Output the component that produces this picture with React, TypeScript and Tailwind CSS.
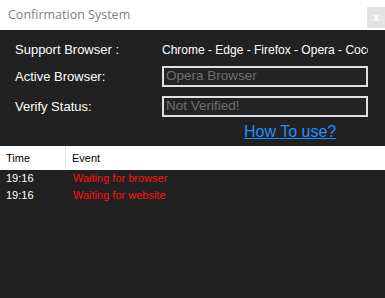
export default function App() {
  const rows = [
    { time: "19:16", event: "Waiting for browser" },
    { time: "19:16", event: "Waiting for website" },
  ];

  return (
    <div
      className="w-[385px] h-[298px] bg-[#212121] overflow-hidden flex flex-col"
      style={{ fontFamily: "'Liberation Sans', Arial, sans-serif" }}
    >
      {/* Title bar */}
      <div className="relative h-[30px] bg-white flex items-center pl-[8px] shrink-0">
        <span className="text-[12.5px] text-[#808080] font-['Open_Sans',sans-serif]">
          Confirmation System
        </span>
        <div className="absolute right-0 top-[7px] w-[18px] h-[21px] bg-[#e3e3e3] flex items-center justify-center text-[11px] font-bold text-white">
          x
        </div>
      </div>

      {/* Form */}
      <div className="pl-[15px] pt-[10px]">
        <div className="flex items-center h-[20px]">
          <div className="w-[147px] text-[13px] text-white">Support Browser :</div>
          <div className="w-[206px] overflow-hidden whitespace-nowrap text-[12px] text-white">
            Chrome - Edge - Firefox - Opera - Coccoc
          </div>
        </div>
        <div className="flex items-center mt-[6px] h-[21px]">
          <div className="w-[147px] text-[13px] text-white">Active Browser:</div>
          <div className="w-[206px] h-[21px] border-2 border-[#e0e0e0] bg-[#232323] flex items-center pl-[2px] text-[13.5px] text-[#6f6f6f]">
            Opera Browser
          </div>
        </div>
        <div className="flex items-center mt-[9px] h-[21px]">
          <div className="w-[147px] text-[13px] text-white">Verify Status:</div>
          <div className="w-[206px] h-[21px] border-2 border-[#e0e0e0] bg-[#232323] flex items-center pl-[2px] text-[13.5px] text-[#6f6f6f]">
            Not Verified!
          </div>
        </div>
        <div className="mt-[6px] h-[17px] flex items-center pl-[229px]">
          <span className="text-[16px] leading-[17px] text-[#1e90ff] underline">How To use?</span>
        </div>
      </div>

      {/* List */}
      <div className="mt-[6px] flex-1 flex flex-col">
        <div className="h-[24px] bg-white flex text-[11px] text-black shrink-0">
          <div className="w-[66px] border-r border-[#e5e5e5] flex items-center pl-[6px]">Time</div>
          <div className="flex items-center pl-[6px]">Event</div>
        </div>
        <div className="text-[11px]">
          {rows.map((r, i) => (
            <div key={i} className="flex h-[17px] items-center">
              <div className="w-[67px] pl-[6px] text-white">{r.time}</div>
              <div className="pl-[6px] text-[#ff1010]">{r.event}</div>
            </div>
          ))}
        </div>
      </div>
    </div>
  );
}
